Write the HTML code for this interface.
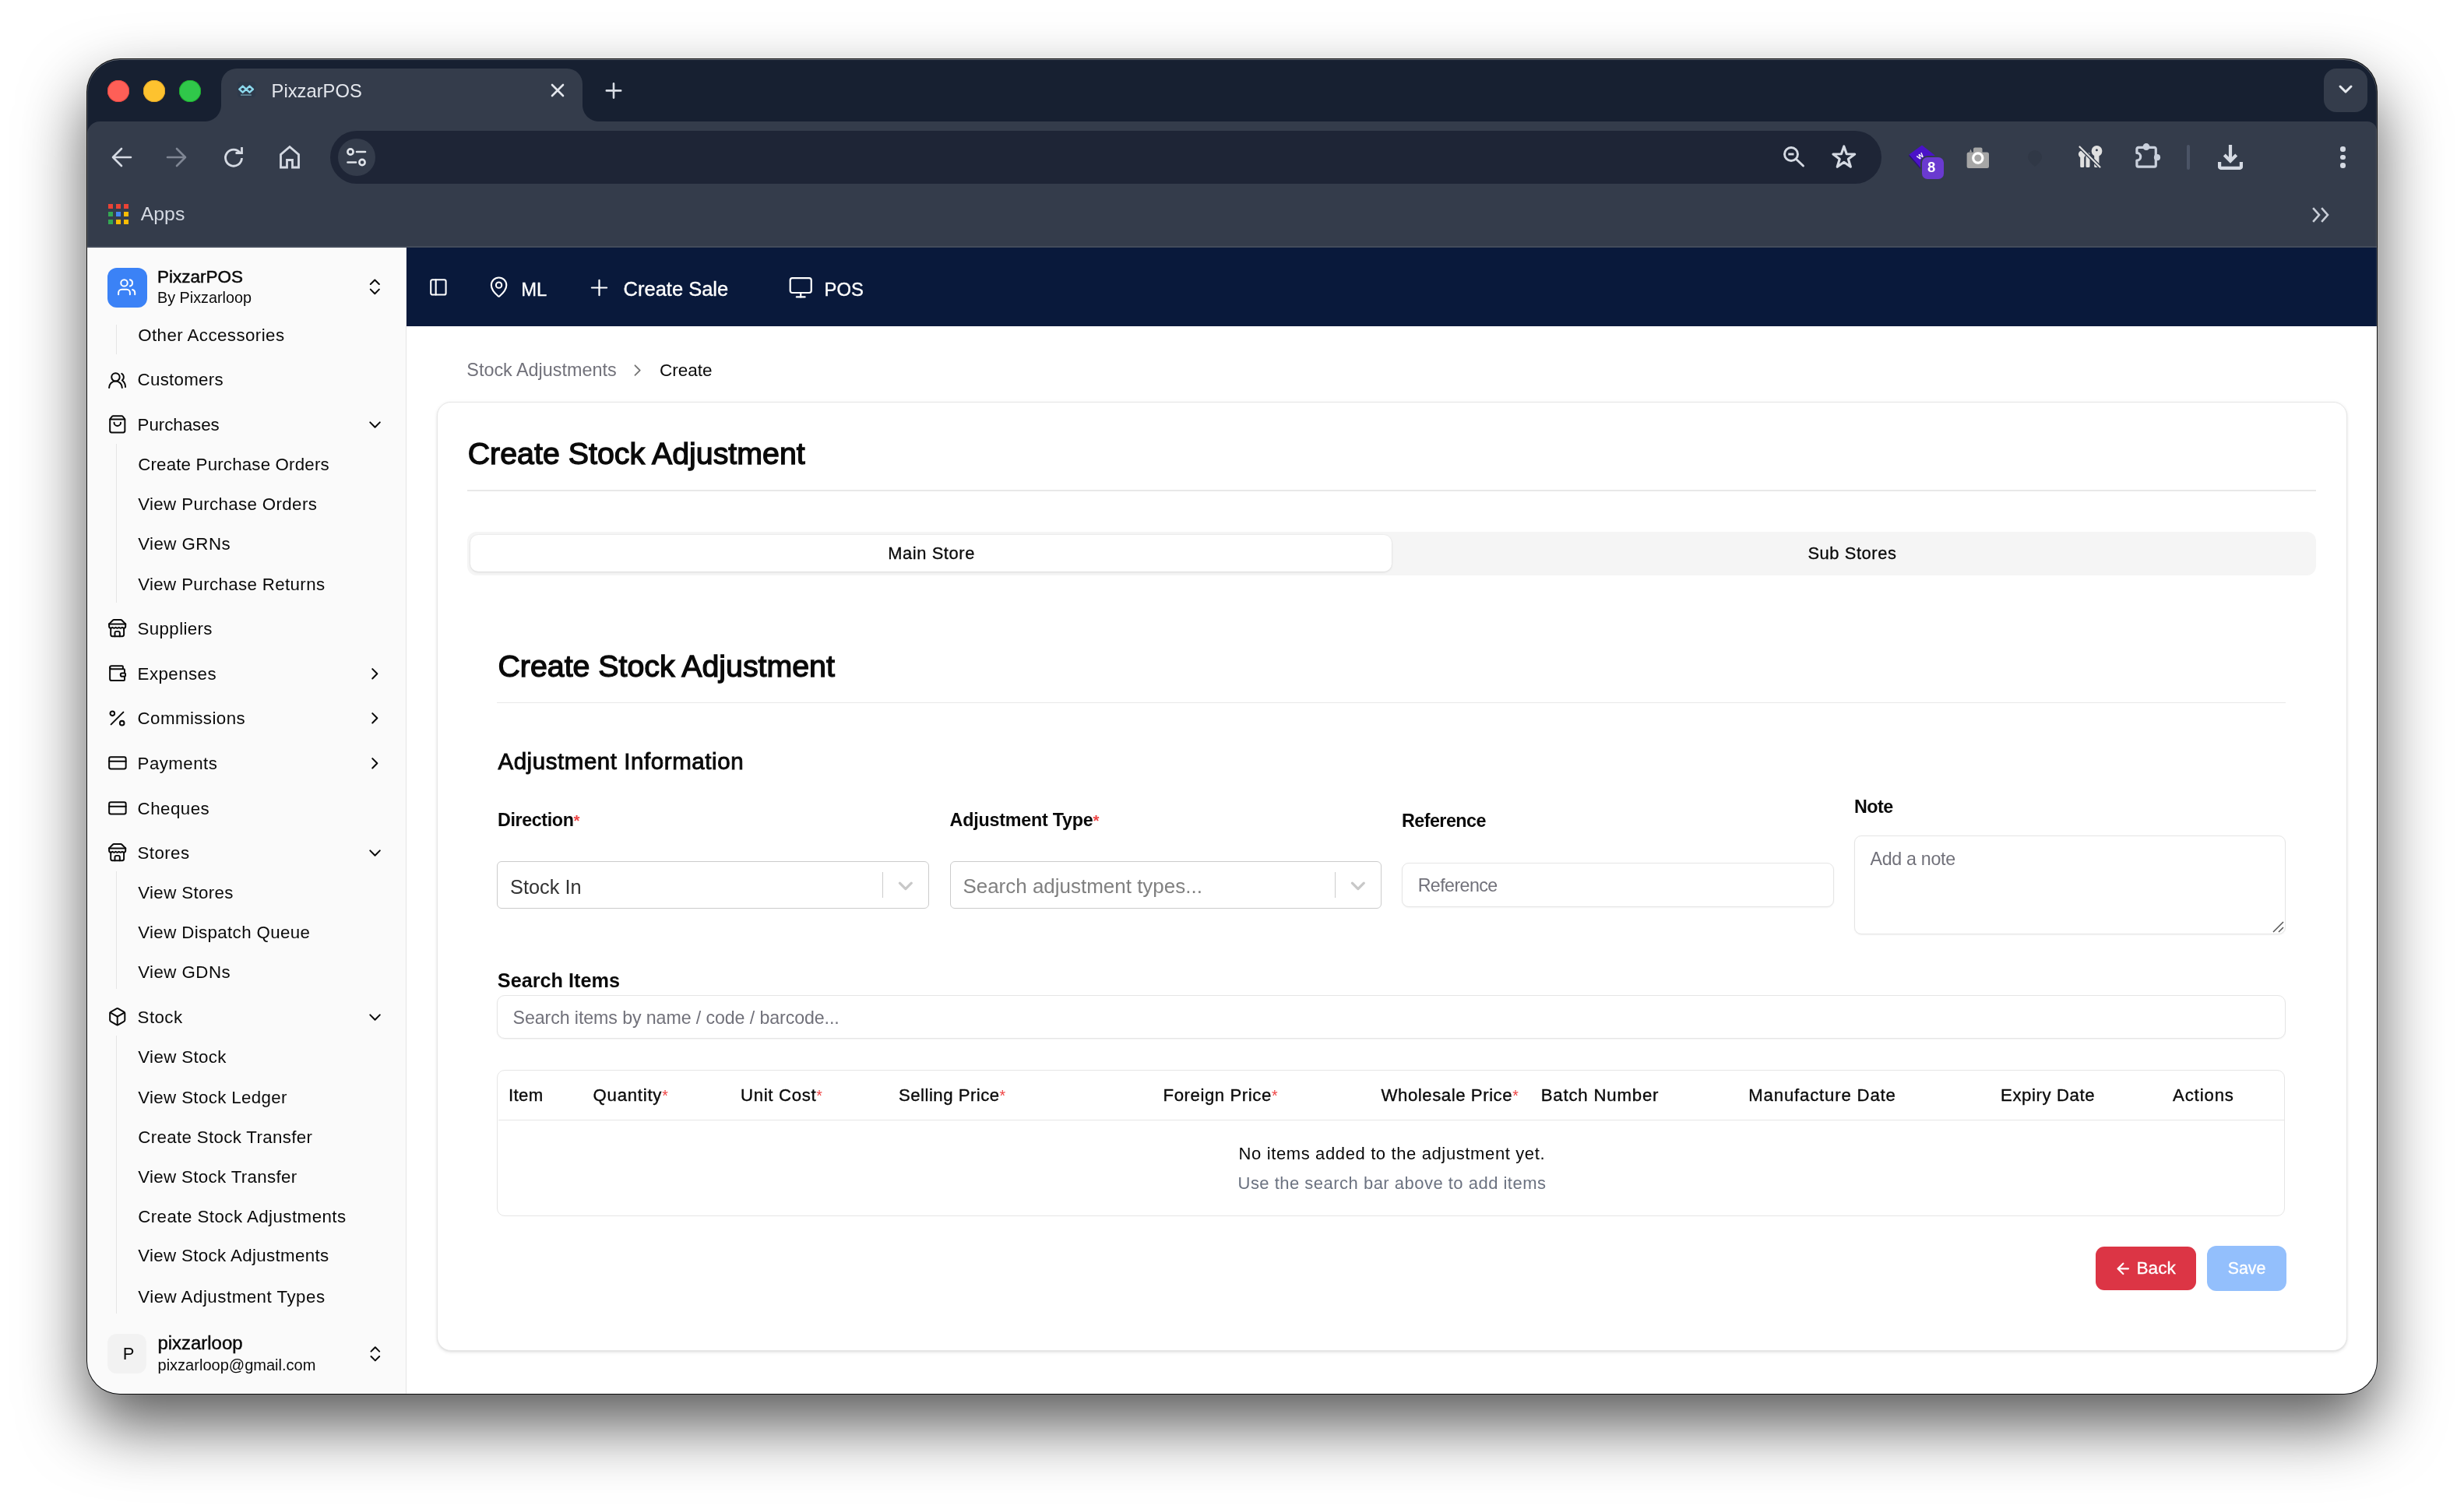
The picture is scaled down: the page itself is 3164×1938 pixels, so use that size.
<!DOCTYPE html>
<html><head><meta charset="utf-8"><style>
html,body{margin:0;padding:0;width:3164px;height:1938px;overflow:hidden;background:#ffffff;font-family:"Liberation Sans",sans-serif;}
.t{position:absolute;white-space:nowrap;line-height:1;font-family:"Liberation Sans",sans-serif;}
#win{position:absolute;left:112px;top:76px;width:2940px;height:1714px;border-radius:42px;overflow:hidden;background:#172031;box-shadow:0 0 0 1px rgba(0,0,0,.92),0 40px 84px rgba(0,0,0,.65);}
#in{position:absolute;left:-112px;top:-76px;width:3164px;height:1938px;will-change:transform;}
#hl{position:absolute;left:0;top:0;right:0;bottom:0;border-radius:42px;box-shadow:inset 0 1px 0 rgba(255,255,255,.22), inset 0 0 0 1px rgba(255,255,255,.16);pointer-events:none}
</style></head><body>
<div id="win"><div id="in">
<div style="position:absolute;left:112px;top:155.5px;width:2940px;height:162.5px;background:#343c4b;border-radius:16px 12px 0 0"></div>
<div style="position:absolute;left:284px;top:88px;width:464px;height:72px;background:#343c4b;border-radius:20px 20px 0 0"></div>
<div style="position:absolute;left:263px;top:134.5px;width:21px;height:21px;background:radial-gradient(circle at 0 0, #172031 20.5px, #343c4b 21.5px)"></div>
<div style="position:absolute;left:748px;top:134.5px;width:21px;height:21px;background:radial-gradient(circle at 100% 0, #172031 20.5px, #343c4b 21.5px)"></div>
<div style="position:absolute;left:138px;top:103px;width:28px;height:28px;border-radius:50%;background:#fe5f57;box-shadow:inset 0 0 0 0.8px #e0443e"></div>
<div style="position:absolute;left:184px;top:103px;width:28px;height:28px;border-radius:50%;background:#fdc22f;box-shadow:inset 0 0 0 0.8px #dea123"></div>
<div style="position:absolute;left:230px;top:103px;width:28px;height:28px;border-radius:50%;background:#30c84a;box-shadow:inset 0 0 0 0.8px #1aab29"></div>
<svg style="position:absolute;left:295px;top:95px;" width="50" height="40" viewBox="0 0 50 40"><rect x="10" y="10" width="23" height="20" rx="4" fill="#1a3048" opacity=".25"/><path d="M16.7 15.6L21.1 19.6L25.5 15.6L29.9 19.6L25.5 23.6L21.1 19.6L16.7 23.6L12.3 19.6Z" fill="none" stroke="#8cd8ec" stroke-width="2.5" stroke-linejoin="round"/><rect x="14" y="26.3" width="13.8" height="1.5" fill="#6a93a3"/></svg>
<div class="t" style="left:348.60px;top:105.10px;font-size:23.76px;color:#e4e7ed;">PixzarPOS</div>
<svg style="position:absolute;left:706px;top:106px;" width="20" height="20" viewBox="0 0 20 20"><path d="M3 3L17 17M17 3L3 17" stroke="#e4e7ed" stroke-width="2.6" stroke-linecap="round"/></svg>
<svg style="position:absolute;left:776px;top:104px;" width="24" height="24" viewBox="0 0 24 24"><path d="M12 3.2V21.6M2.8 12.4H21.2" stroke="#d8dce4" stroke-width="2.6" stroke-linecap="round"/></svg>
<div style="position:absolute;left:2984px;top:88px;width:56px;height:56px;background:#343c4b;border-radius:16px"></div>
<svg style="position:absolute;left:3002px;top:108px;" width="20" height="14" viewBox="0 0 20 14"><path d="M3 3L10 10L17 3" fill="none" stroke="#e6e9ee" stroke-width="3" stroke-linecap="round" stroke-linejoin="round"/></svg>
<svg style="position:absolute;left:142px;top:188px;" width="28" height="28" viewBox="0 0 28 28"><path d="M14 3L3 14L14 25M3 14H26" fill="none" stroke="#d5dae3" stroke-width="2.6" stroke-linecap="round" stroke-linejoin="round"/></svg>
<svg style="position:absolute;left:213px;top:188px;" width="28" height="28" viewBox="0 0 28 28"><path d="M14 3L25 14L14 25M2 14H25" fill="none" stroke="#7f8694" stroke-width="2.6" stroke-linecap="round" stroke-linejoin="round"/></svg>
<svg style="position:absolute;left:286px;top:187px;" width="28" height="30" viewBox="0 0 28 30"><path d="M22.5 9.5A10.5 10.5 0 1 0 24.5 16" fill="none" stroke="#d5dae3" stroke-width="2.8"/><path d="M16.5 9.5H24.5V2" fill="none" stroke="#d5dae3" stroke-width="2.8"/></svg>
<svg style="position:absolute;left:358px;top:186px;" width="28" height="32" viewBox="0 0 28 32"><path d="M2.5 29V12.5L14 2.5L25.5 12.5V29H17.5V19.5H10.5V29Z" fill="none" stroke="#d5dae3" stroke-width="2.8" stroke-linejoin="miter"/></svg>
<div style="position:absolute;left:424px;top:168px;width:1992px;height:68px;background:#1e2536;border-radius:34px"></div>
<div style="position:absolute;left:433.5px;top:178px;width:48px;height:48px;border-radius:50%;background:#343c4b"></div>
<svg style="position:absolute;left:444px;top:189px;" width="28" height="26" viewBox="0 0 28 26"><g fill="none" stroke="#e0e4ea" stroke-width="2.6" stroke-linecap="round"><circle cx="6" cy="6" r="3.6"/><path d="M14 6H25"/><circle cx="21" cy="19.5" r="3.6"/><path d="M2.5 19.5H13"/></g></svg>
<svg style="position:absolute;left:2286px;top:184px;" width="36" height="36" viewBox="0 0 36 36"><g fill="none" stroke="#d5dae3" stroke-width="2.9"><circle cx="14" cy="14" r="8.5"/><path d="M20.3 20.3L29.5 29" stroke-linecap="round"/><path d="M10.3 14H17.5"/></g></svg>
<svg style="position:absolute;left:2350px;top:184px;" width="36" height="36" viewBox="0 0 36 36"><path d="M17.80 3.90 L21.23 13.78 L31.69 13.99 L23.35 20.30 L26.38 30.31 L17.80 24.34 L9.22 30.31 L12.25 20.30 L3.91 13.99 L14.37 13.78Z" fill="none" stroke="#d5dae3" stroke-width="3.1" stroke-linejoin="round"/></svg>
<svg style="position:absolute;left:2448px;top:182px;" width="40" height="38" viewBox="0 0 40 38"><path d="M3.4 16.5L20 4.4L36.6 17.4L18 33.6Z" fill="#4a12c8"/><path d="M3.4 16.5L18 33.6L18 35L3.4 18.5Z" fill="#2a0a80"/><text x="13" y="22" font-family="Liberation Sans" font-weight="bold" font-size="11" fill="#fff" transform="rotate(-38 17 18)">w</text></svg>
<div style="position:absolute;left:2468px;top:202px;width:28px;height:28.19999999999999px;background:#6a3ad0;border-radius:7px;box-shadow:0 0 0 2px #343c4b"></div>
<div class="t" style="left:2475.00px;top:206.28px;font-size:18.50px;color:#ffffff;font-weight:bold;">8</div>
<svg style="position:absolute;left:2523px;top:186px;" width="34" height="32" viewBox="0 0 34 32"><path d="M2.6 12a2.5 2.5 0 0 1 2.5-2.5H11V5.5a2 2 0 0 1 2-2h7.5a2 2 0 0 1 2 2v4h6a2.5 2.5 0 0 1 2.5 2.5v15.5a2.5 2.5 0 0 1-2.5 2.5H5.1a2.5 2.5 0 0 1-2.5-2.5Z" fill="#a6a6a6"/><path d="M6 9.5L7.5 5.5L9 9.5Z" fill="#a6a6a6"/><circle cx="16.8" cy="17" r="6.1" fill="none" stroke="#ffffff" stroke-width="3.2"/></svg>
<svg style="position:absolute;left:2600px;top:191px;" width="26" height="24" viewBox="0 0 26 24"><path d="M13 2a9 9 0 0 1 9 9c0 5-9 12-9 12S4 16 4 11a9 9 0 0 1 9-9Z" fill="#2c3341" opacity=".45"/></svg>
<svg style="position:absolute;left:2666px;top:184px;" width="36" height="34" viewBox="0 0 36 34"><g fill="#e0e0e0"><circle cx="7.5" cy="14" r="4.6"/><rect x="5.2" y="16" width="5" height="15" rx="1.5"/><circle cx="26.5" cy="10" r="6.9"/><rect x="23.2" y="14" width="6.2" height="17" rx="1.5"/><rect x="12.5" y="12" width="5" height="19" rx="1.5"/></g><circle cx="26.4" cy="8.8" r="1.5" fill="#343c4b"/><path d="M4 4L31 31" stroke="#343c4b" stroke-width="4.6"/><path d="M4.5 4.5L30.5 30.5" stroke="#e0e0e0" stroke-width="2.2" stroke-linecap="round"/></svg>
<svg style="position:absolute;left:2740px;top:182px;" width="38" height="36" viewBox="0 0 38 36"><g fill="#c9d0dc"><circle cx="16" cy="6.6" r="4.5"/><circle cx="30" cy="20.2" r="4.1"/></g><path d="M6 7.4H26.3a2 2 0 0 1 2 2V30.2a2 2 0 0 1-2 2H5.9a2 2 0 0 1-2-2V24A4.6 4.6 0 0 0 3.9 14.4V9.4a2 2 0 0 1 2-2Z" fill="none" stroke="#c9d0dc" stroke-width="3.2" stroke-linejoin="round"/></svg>
<div style="position:absolute;left:2808px;top:186px;width:4px;height:32px;background:#4b5466;border-radius:2px"></div>
<svg style="position:absolute;left:2846px;top:184px;" width="36" height="36" viewBox="0 0 36 36"><g fill="none" stroke="#d5dae3" stroke-width="4.2"><path d="M18 2V23"/><path d="M10.3 15L18 22.8L25.7 15" stroke-linejoin="miter"/><path d="M4.1 24V30.3a1.5 1.5 0 0 0 1.5 1.5H30.4a1.5 1.5 0 0 0 1.5-1.5V24"/></g></svg>
<div style="position:absolute;left:3005px;top:188.2px;width:6.6px;height:6.6px;border-radius:50%;background:#d5dae3"></div>
<div style="position:absolute;left:3005px;top:198.7px;width:6.6px;height:6.6px;border-radius:50%;background:#d5dae3"></div>
<div style="position:absolute;left:3005px;top:209.2px;width:6.6px;height:6.6px;border-radius:50%;background:#d5dae3"></div>
<div style="position:absolute;left:138.6px;top:261.7px;width:6.599999999999994px;height:6.600000000000023px;background:#ea4335"></div>
<div style="position:absolute;left:148.7px;top:261.7px;width:6.599999999999994px;height:6.600000000000023px;background:#ea4335"></div>
<div style="position:absolute;left:158.79999999999998px;top:261.7px;width:6.599999999999994px;height:6.600000000000023px;background:#ea4335"></div>
<div style="position:absolute;left:138.6px;top:271.8px;width:6.599999999999994px;height:6.600000000000023px;background:#34a853"></div>
<div style="position:absolute;left:148.7px;top:271.8px;width:6.599999999999994px;height:6.600000000000023px;background:#4285f4"></div>
<div style="position:absolute;left:158.79999999999998px;top:271.8px;width:6.599999999999994px;height:6.600000000000023px;background:#fbbc05"></div>
<div style="position:absolute;left:138.6px;top:281.9px;width:6.599999999999994px;height:6.600000000000023px;background:#34a853"></div>
<div style="position:absolute;left:148.7px;top:281.9px;width:6.599999999999994px;height:6.600000000000023px;background:#fbbc05"></div>
<div style="position:absolute;left:158.79999999999998px;top:281.9px;width:6.599999999999994px;height:6.600000000000023px;background:#fbbc05"></div>
<div class="t" style="left:180.80px;top:262.93px;font-size:24.79px;color:#d5dae3;">Apps</div>
<svg style="position:absolute;left:2968px;top:266px;" width="26" height="20" viewBox="0 0 26 20"><g fill="none" stroke="#c9ced8" stroke-width="2.6" stroke-linecap="square"><path d="M3 2L10 10L3 18"/><path d="M14 2L21 10L14 18"/></g></svg>
<div style="position:absolute;left:112px;top:315.5px;width:2940px;height:2.3000000000000114px;background:#434b5a"></div>
<div style="position:absolute;left:112px;top:318px;width:409px;height:1474px;background:#fafafa"></div>
<div style="position:absolute;left:521px;top:318px;width:1px;height:1474px;background:#e5e5e5"></div>
<div style="position:absolute;left:522px;top:318px;width:2530px;height:100.69999999999999px;background:#09193b"></div>
<div style="position:absolute;left:522px;top:418.7px;width:2530px;height:1373.3px;background:#ffffff"></div>
<div style="position:absolute;left:138px;top:344px;width:50.69999999999999px;height:50.69999999999999px;background:#3b82f6;border-radius:12px"></div>
<svg style="position:absolute;left:150.23px;top:356.13px" width="25.35" height="25.35" viewBox="0 0 24 24" fill="none" stroke="#ffffff" stroke-width="1.894" stroke-linecap="round" stroke-linejoin="round"><path d="M16 21v-2a4 4 0 0 0-4-4H6a4 4 0 0 0-4 4v2"/><circle cx="9" cy="7" r="4"/><path d="M22 21v-2a4 4 0 0 0-3-3.87"/><path d="M16 3.13a4 4 0 0 1 0 7.75"/></svg>
<div class="t" style="left:202.00px;top:345.08px;font-size:22.49px;color:#0a0a0a;-webkit-text-stroke:0.5px #0a0a0a;">PixzarPOS</div>
<div class="t" style="left:202.00px;top:372.98px;font-size:19.79px;color:#0a0a0a;">By Pixzarloop</div>
<svg style="position:absolute;left:468.23px;top:355.48px" width="26.64" height="26.64" viewBox="0 0 24 24" fill="none" stroke="#0a0a0a" stroke-width="1.802" stroke-linecap="round" stroke-linejoin="round"><path d="m7 15 5 5 5-5"/><path d="m7 9 5-5 5 5"/></svg>
<div style="position:absolute;left:149px;top:416.5px;width:1.1999999999999886px;height:38.5px;background:#e5e5e5"></div>
<div class="t" style="left:177.20px;top:419.75px;font-size:22.30px;color:#0a0a0a;letter-spacing:0.434px;">Other Accessories</div>
<svg style="position:absolute;left:138.20px;top:475.60px" width="25.10" height="25.10" viewBox="0 0 24 24" fill="none" stroke="#0a0a0a" stroke-width="1.912" stroke-linecap="round" stroke-linejoin="round"><path d="M18 21a8 8 0 0 0-16 0"/><circle cx="10" cy="8" r="5"/><path d="M22 20c0-3.37-2-6.5-4-8a5 5 0 0 0-.45-8.3"/></svg>
<div class="t" style="left:176.60px;top:476.84px;font-size:22.30px;color:#0a0a0a;letter-spacing:0.274px;">Customers</div>
<svg style="position:absolute;left:138.03px;top:531.63px" width="25.55" height="25.55" viewBox="0 0 24 24" fill="none" stroke="#0a0a0a" stroke-width="1.879" stroke-linecap="round" stroke-linejoin="round"><path d="M16 10a4 4 0 0 1-8 0"/><path d="M3.103 6.034h17.794"/><path d="M3.4 5.467a2 2 0 0 0-.4 1.2V20a2 2 0 0 0 2 2h14a2 2 0 0 0 2-2V6.667a2 2 0 0 0-.4-1.2l-2-2.667A2 2 0 0 0 17 2H7a2 2 0 0 0-1.6.8z"/></svg>
<div class="t" style="left:176.60px;top:535.14px;font-size:22.30px;color:#0a0a0a;letter-spacing:-0.033px;">Purchases</div>
<svg style="position:absolute;left:469.30px;top:532.85px" width="25.10" height="25.10" viewBox="0 0 24 24" fill="none" stroke="#0a0a0a" stroke-width="1.912" stroke-linecap="round" stroke-linejoin="round"><path d="m6 9 6 6 6-6"/></svg>
<div style="position:absolute;left:149px;top:570.4px;width:1.1999999999999886px;height:204.0px;background:#e5e5e5"></div>
<div class="t" style="left:177.20px;top:585.54px;font-size:22.30px;color:#0a0a0a;letter-spacing:0.181px;">Create Purchase Orders</div>
<div class="t" style="left:177.20px;top:636.74px;font-size:22.30px;color:#0a0a0a;letter-spacing:0.368px;">View Purchase Orders</div>
<div class="t" style="left:177.20px;top:687.84px;font-size:22.30px;color:#0a0a0a;letter-spacing:0.451px;">View GRNs</div>
<div class="t" style="left:177.20px;top:739.94px;font-size:22.30px;color:#0a0a0a;letter-spacing:0.365px;">View Purchase Returns</div>
<svg style="position:absolute;left:138.29px;top:794.09px" width="25.32" height="25.32" viewBox="0 0 24 24" fill="none" stroke="#0a0a0a" stroke-width="1.896" stroke-linecap="round" stroke-linejoin="round"><path d="m2 7 4.41-4.41A2 2 0 0 1 7.83 2h8.34a2 2 0 0 1 1.42.59L22 7"/><path d="M4 12v8a2 2 0 0 0 2 2h12a2 2 0 0 0 2-2v-8"/><path d="M15 22v-4a2 2 0 0 0-2-2h-2a2 2 0 0 0-2 2v4"/><path d="M2 7h20"/><path d="M22 7v3a2 2 0 0 1-2 2a2.7 2.7 0 0 1-1.59-.63.7.7 0 0 0-.82 0A2.7 2.7 0 0 1 16 12a2.7 2.7 0 0 1-1.59-.63.7.7 0 0 0-.82 0A2.7 2.7 0 0 1 12 12a2.7 2.7 0 0 1-1.59-.63.7.7 0 0 0-.82 0A2.7 2.7 0 0 1 8 12a2.7 2.7 0 0 1-1.59-.63.7.7 0 0 0-.82 0A2.7 2.7 0 0 1 4 12a2 2 0 0 1-2-2V7"/></svg>
<div class="t" style="left:176.60px;top:797.14px;font-size:22.30px;color:#0a0a0a;letter-spacing:0.365px;">Suppliers</div>
<svg style="position:absolute;left:138.43px;top:852.28px" width="25.13" height="25.13" viewBox="0 0 24 24" fill="none" stroke="#0a0a0a" stroke-width="1.910" stroke-linecap="round" stroke-linejoin="round"><path d="M19 7V4a1 1 0 0 0-1-1H5a2 2 0 0 0 0 4h15a1 1 0 0 1 1 1v4h-3a2 2 0 0 0 0 4h3a1 1 0 0 0 1-1v-2a1 1 0 0 0-1-1"/><path d="M3 5v14a2 2 0 0 0 2 2h15a1 1 0 0 0 1-1v-4"/></svg>
<div class="t" style="left:176.60px;top:854.54px;font-size:22.30px;color:#0a0a0a;letter-spacing:0.439px;">Expenses</div>
<svg style="position:absolute;left:469.05px;top:852.50px" width="24.60" height="24.60" viewBox="0 0 24 24" fill="none" stroke="#0a0a0a" stroke-width="1.951" stroke-linecap="round" stroke-linejoin="round"><path d="m9 18 6-6-6-6"/></svg>
<svg style="position:absolute;left:137.00px;top:909.00px" width="27.00" height="27.00" viewBox="0 0 24 24" fill="none" stroke="#0a0a0a" stroke-width="1.778" stroke-linecap="round" stroke-linejoin="round"><line x1="19" x2="5" y1="5" y2="19"/><circle cx="6.5" cy="6.5" r="2.5"/><circle cx="17.5" cy="17.5" r="2.5"/></svg>
<div class="t" style="left:176.60px;top:912.24px;font-size:22.30px;color:#0a0a0a;letter-spacing:0.42px;">Commissions</div>
<svg style="position:absolute;left:469.05px;top:910.20px" width="24.60" height="24.60" viewBox="0 0 24 24" fill="none" stroke="#0a0a0a" stroke-width="1.951" stroke-linecap="round" stroke-linejoin="round"><path d="m9 18 6-6-6-6"/></svg>
<svg style="position:absolute;left:137.75px;top:966.70px" width="25.81" height="25.81" viewBox="0 0 24 24" fill="none" stroke="#0a0a0a" stroke-width="1.860" stroke-linecap="round" stroke-linejoin="round"><rect width="20" height="14" x="2" y="5" rx="2"/><line x1="2" x2="22" y1="10" y2="10"/></svg>
<div class="t" style="left:176.60px;top:969.64px;font-size:22.30px;color:#0a0a0a;letter-spacing:0.445px;">Payments</div>
<svg style="position:absolute;left:469.05px;top:967.60px" width="24.60" height="24.60" viewBox="0 0 24 24" fill="none" stroke="#0a0a0a" stroke-width="1.951" stroke-linecap="round" stroke-linejoin="round"><path d="m9 18 6-6-6-6"/></svg>
<svg style="position:absolute;left:137.75px;top:1024.70px" width="25.81" height="25.81" viewBox="0 0 24 24" fill="none" stroke="#0a0a0a" stroke-width="1.860" stroke-linecap="round" stroke-linejoin="round"><rect width="20" height="14" x="2" y="5" rx="2"/><line x1="2" x2="22" y1="10" y2="10"/></svg>
<div class="t" style="left:176.60px;top:1027.65px;font-size:22.30px;color:#0a0a0a;letter-spacing:0.467px;">Cheques</div>
<svg style="position:absolute;left:138.29px;top:1082.09px" width="25.32" height="25.32" viewBox="0 0 24 24" fill="none" stroke="#0a0a0a" stroke-width="1.896" stroke-linecap="round" stroke-linejoin="round"><path d="m2 7 4.41-4.41A2 2 0 0 1 7.83 2h8.34a2 2 0 0 1 1.42.59L22 7"/><path d="M4 12v8a2 2 0 0 0 2 2h12a2 2 0 0 0 2-2v-8"/><path d="M15 22v-4a2 2 0 0 0-2-2h-2a2 2 0 0 0-2 2v4"/><path d="M2 7h20"/><path d="M22 7v3a2 2 0 0 1-2 2a2.7 2.7 0 0 1-1.59-.63.7.7 0 0 0-.82 0A2.7 2.7 0 0 1 16 12a2.7 2.7 0 0 1-1.59-.63.7.7 0 0 0-.82 0A2.7 2.7 0 0 1 12 12a2.7 2.7 0 0 1-1.59-.63.7.7 0 0 0-.82 0A2.7 2.7 0 0 1 8 12a2.7 2.7 0 0 1-1.59-.63.7.7 0 0 0-.82 0A2.7 2.7 0 0 1 4 12a2 2 0 0 1-2-2V7"/></svg>
<div class="t" style="left:176.60px;top:1085.35px;font-size:22.30px;color:#0a0a0a;letter-spacing:0.405px;">Stores</div>
<svg style="position:absolute;left:469.30px;top:1083.05px" width="25.10" height="25.10" viewBox="0 0 24 24" fill="none" stroke="#0a0a0a" stroke-width="1.912" stroke-linecap="round" stroke-linejoin="round"><path d="m6 9 6 6 6-6"/></svg>
<div style="position:absolute;left:149px;top:1119px;width:1.1999999999999886px;height:151px;background:#e5e5e5"></div>
<div class="t" style="left:177.20px;top:1135.95px;font-size:22.30px;color:#0a0a0a;letter-spacing:0.372px;">View Stores</div>
<div class="t" style="left:177.20px;top:1186.85px;font-size:22.30px;color:#0a0a0a;letter-spacing:0.373px;">View Dispatch Queue</div>
<div class="t" style="left:177.20px;top:1238.45px;font-size:22.30px;color:#0a0a0a;letter-spacing:0.451px;">View GDNs</div>
<svg style="position:absolute;left:137.92px;top:1292.77px" width="25.47" height="25.47" viewBox="0 0 24 24" fill="none" stroke="#0a0a0a" stroke-width="1.885" stroke-linecap="round" stroke-linejoin="round"><path d="M21 8a2 2 0 0 0-1-1.73l-7-4a2 2 0 0 0-2 0l-7 4A2 2 0 0 0 3 8v8a2 2 0 0 0 1 1.73l7 4a2 2 0 0 0 2 0l7-4A2 2 0 0 0 21 16Z"/><path d="m3.3 7 8.7 5 8.7-5"/><path d="M12 22V12"/></svg>
<div class="t" style="left:176.60px;top:1296.15px;font-size:22.30px;color:#0a0a0a;letter-spacing:0.438px;">Stock</div>
<svg style="position:absolute;left:469.30px;top:1293.85px" width="25.10" height="25.10" viewBox="0 0 24 24" fill="none" stroke="#0a0a0a" stroke-width="1.912" stroke-linecap="round" stroke-linejoin="round"><path d="m6 9 6 6 6-6"/></svg>
<div style="position:absolute;left:149px;top:1329.8px;width:1.1999999999999886px;height:357.70000000000005px;background:#e5e5e5"></div>
<div class="t" style="left:177.20px;top:1346.85px;font-size:22.30px;color:#0a0a0a;letter-spacing:0.383px;">View Stock</div>
<div class="t" style="left:177.20px;top:1399.25px;font-size:22.30px;color:#0a0a0a;letter-spacing:0.364px;">View Stock Ledger</div>
<div class="t" style="left:177.20px;top:1449.95px;font-size:22.30px;color:#0a0a0a;letter-spacing:0.34px;">Create Stock Transfer</div>
<div class="t" style="left:177.20px;top:1500.75px;font-size:22.30px;color:#0a0a0a;letter-spacing:0.345px;">View Stock Transfer</div>
<div class="t" style="left:177.20px;top:1551.95px;font-size:22.30px;color:#0a0a0a;letter-spacing:0.453px;">Create Stock Adjustments</div>
<div class="t" style="left:177.20px;top:1602.45px;font-size:22.30px;color:#0a0a0a;letter-spacing:0.355px;">View Stock Adjustments</div>
<div class="t" style="left:177.20px;top:1654.65px;font-size:22.30px;color:#0a0a0a;letter-spacing:0.508px;">View Adjustment Types</div>
<div style="position:absolute;left:137.9px;top:1712.7px;width:50.29999999999998px;height:51.200000000000045px;background:#f2f2f2;border-radius:12px"></div>
<div class="t" style="left:157.70px;top:1728.10px;font-size:22.00px;color:#0a0a0a;">P</div>
<div class="t" style="left:202.50px;top:1713.47px;font-size:23.91px;color:#0a0a0a;-webkit-text-stroke:0.45px #0a0a0a;">pixzarloop</div>
<div class="t" style="left:202.50px;top:1742.77px;font-size:20.04px;color:#0a0a0a;">pixzarloop@gmail.com</div>
<svg style="position:absolute;left:469.02px;top:1725.72px" width="25.66" height="25.66" viewBox="0 0 24 24" fill="none" stroke="#0a0a0a" stroke-width="1.870" stroke-linecap="round" stroke-linejoin="round"><path d="m7 15 5 5 5-5"/><path d="m7 9 5-5 5 5"/></svg>
<svg style="position:absolute;left:549.95px;top:356.00px" width="25.80" height="25.80" viewBox="0 0 24 24" fill="none" stroke="#ffffff" stroke-width="1.953" stroke-linecap="round" stroke-linejoin="round"><rect width="18" height="18" x="3" y="3" rx="2"/><path d="M9 3v18"/></svg>
<svg style="position:absolute;left:625.77px;top:354.07px" width="29.16" height="29.16" viewBox="0 0 24 24" fill="none" stroke="#ffffff" stroke-width="1.728" stroke-linecap="round" stroke-linejoin="round"><path d="M20 10c0 4.993-5.539 10.193-7.399 11.799a1 1 0 0 1-1.202 0C9.539 20.193 4 14.993 4 10a8 8 0 0 1 16 0"/><circle cx="12" cy="10" r="3"/></svg>
<div class="t" style="left:669.30px;top:360.01px;font-size:23.76px;color:#ffffff;-webkit-text-stroke:0.35px #ffffff;">ML</div>
<svg style="position:absolute;left:753.40px;top:352.55px" width="33.00" height="33.00" viewBox="0 0 24 24" fill="none" stroke="#ffffff" stroke-width="1.600" stroke-linecap="round" stroke-linejoin="round"><path d="M5 12h14"/><path d="M12 5v14"/></svg>
<div class="t" style="left:800.60px;top:358.54px;font-size:25.49px;color:#ffffff;-webkit-text-stroke:0.35px #ffffff;">Create Sale</div>
<svg style="position:absolute;left:1011.76px;top:353.21px" width="32.48" height="32.48" viewBox="0 0 24 24" fill="none" stroke="#ffffff" stroke-width="1.626" stroke-linecap="round" stroke-linejoin="round"><rect width="20" height="14" x="2" y="3" rx="2"/><line x1="8" x2="16" y1="21" y2="21"/><line x1="12" x2="12" y1="17" y2="21"/></svg>
<div class="t" style="left:1058.50px;top:359.95px;font-size:23.82px;color:#ffffff;-webkit-text-stroke:0.35px #ffffff;">POS</div>
<div class="t" style="left:599.30px;top:463.91px;font-size:23.40px;color:#71717a;">Stock Adjustments</div>
<svg style="position:absolute;left:806.20px;top:462.90px" width="25.20" height="25.20" viewBox="0 0 24 24" fill="none" stroke="#737373" stroke-width="1.714" stroke-linecap="round" stroke-linejoin="round"><path d="m9 18 6-6-6-6"/></svg>
<div class="t" style="left:847.00px;top:464.66px;font-size:22.52px;color:#0a0a0a;">Create</div>
<div style="position:absolute;left:560.5px;top:516px;width:2453.0px;height:1218.5px;box-sizing:border-box;border:1.5px solid #e6e6e6;border-radius:18px;background:#fff;box-shadow:0 1.5px 4.5px rgba(0,0,0,.09), 0 1.5px 3px -1.5px rgba(0,0,0,.1)"></div>
<div class="t" style="left:600.70px;top:563.20px;font-size:39.30px;color:#0a0a0a;letter-spacing:0.026px;-webkit-text-stroke:1.35px #0a0a0a;">Create Stock Adjustment</div>
<div style="position:absolute;left:599.5px;top:629px;width:2374.5px;height:1.5px;background:#e8e8e8"></div>
<div style="position:absolute;left:599.5px;top:682.5px;width:2374.5px;height:56.0px;background:#f5f5f5;border-radius:12px"></div>
<div style="position:absolute;left:603.6px;top:686.8px;width:1183.4px;height:47.200000000000045px;background:#ffffff;border-radius:10px;box-shadow:0 1px 3px rgba(0,0,0,.10), 0 0 0 1px rgba(0,0,0,.02)"></div>
<div class="t" style="left:1140.20px;top:699.78px;font-size:21.90px;color:#0a0a0a;letter-spacing:0.589px;-webkit-text-stroke:0.3px #0a0a0a;">Main Store</div>
<div class="t" style="left:2321.40px;top:699.78px;font-size:21.90px;color:#0a0a0a;letter-spacing:0.584px;-webkit-text-stroke:0.3px #0a0a0a;">Sub Stores</div>
<div class="t" style="left:639.50px;top:836.00px;font-size:39.30px;color:#0a0a0a;letter-spacing:-0.006px;-webkit-text-stroke:1.35px #0a0a0a;">Create Stock Adjustment</div>
<div style="position:absolute;left:637.7px;top:901.5px;width:2297.3px;height:1.5px;background:#e8e8e8"></div>
<div class="t" style="left:639.40px;top:963.32px;font-size:29.50px;color:#0a0a0a;letter-spacing:0.564px;-webkit-text-stroke:0.9px #0a0a0a;">Adjustment Information</div>
<div class="t" style="left:639.00px;top:1042.39px;font-size:23.30px;color:#0a0a0a;font-weight:bold;letter-spacing:-0.384px;">Direction<span style="color:#ef4444;-webkit-text-stroke:0;font-size:88%">*</span></div>
<div class="t" style="left:1219.60px;top:1042.39px;font-size:23.30px;color:#0a0a0a;font-weight:bold;letter-spacing:-0.223px;">Adjustment Type<span style="color:#ef4444;-webkit-text-stroke:0;font-size:88%">*</span></div>
<div class="t" style="left:1800.00px;top:1042.79px;font-size:23.30px;color:#0a0a0a;font-weight:bold;letter-spacing:-0.535px;">Reference</div>
<div class="t" style="left:2381.00px;top:1024.69px;font-size:23.30px;color:#0a0a0a;font-weight:bold;letter-spacing:-0.493px;">Note</div>
<div style="position:absolute;left:638.2px;top:1106.2px;width:555.0999999999999px;height:60.399999999999864px;box-sizing:border-box;border:1.5px solid #cccccc;border-radius:6px;background:#fff"></div>
<div style="position:absolute;left:1133.2px;top:1120px;width:1.2000000000000455px;height:33.200000000000045px;background:#cccccc"></div>
<svg style="position:absolute;left:1148.25px;top:1123.25px" width="29.70" height="29.70" viewBox="0 0 24 24" fill="none" stroke="#c8c8c8" stroke-width="2.667" stroke-linecap="round" stroke-linejoin="round"><path d="m6 9 6 6 6-6"/></svg>
<div class="t" style="left:655.00px;top:1126.57px;font-size:25.33px;color:#333333;">Stock In</div>
<div style="position:absolute;left:1219.6px;top:1106.2px;width:554.7px;height:60.399999999999864px;box-sizing:border-box;border:1.5px solid #cccccc;border-radius:6px;background:#fff"></div>
<div style="position:absolute;left:1714.2px;top:1120px;width:1.2000000000000455px;height:33.200000000000045px;background:#cccccc"></div>
<svg style="position:absolute;left:1729.25px;top:1123.25px" width="29.70" height="29.70" viewBox="0 0 24 24" fill="none" stroke="#c8c8c8" stroke-width="2.667" stroke-linecap="round" stroke-linejoin="round"><path d="m6 9 6 6 6-6"/></svg>
<div class="t" style="left:1236.40px;top:1126.02px;font-size:25.97px;color:#808080;">Search adjustment types...</div>
<div style="position:absolute;left:1800px;top:1108px;width:554.6999999999998px;height:57.200000000000045px;box-sizing:border-box;border:1.5px solid #e5e5e5;border-radius:9px;background:#fff;box-shadow:0 1px 2px rgba(0,0,0,.05)"></div>
<div class="t" style="left:1820.70px;top:1125.88px;font-size:23.20px;color:#71717a;letter-spacing:-0.568px;">Reference</div>
<div style="position:absolute;left:2381px;top:1073.3px;width:554px;height:126.90000000000009px;box-sizing:border-box;border:1.5px solid #e5e5e5;border-radius:9px;background:#fff;box-shadow:0 1px 2px rgba(0,0,0,.05)"></div>
<div class="t" style="left:2401.60px;top:1091.88px;font-size:23.20px;color:#71717a;letter-spacing:-0.304px;">Add a note</div>
<svg style="position:absolute;left:2917px;top:1182px;" width="18" height="17" viewBox="0 0 18 17"><path d="M2 15L15 2M9 15L15 9" stroke="#555" stroke-width="1.5"/></svg>
<div class="t" style="left:638.80px;top:1246.54px;font-size:25.25px;color:#0a0a0a;font-weight:bold;">Search Items</div>
<div style="position:absolute;left:638.2px;top:1278.3px;width:2296.8px;height:56.0px;box-sizing:border-box;border:1.5px solid #e5e5e5;border-radius:10px;background:#fff;box-shadow:0 1px 2px rgba(0,0,0,.05)"></div>
<div class="t" style="left:658.60px;top:1295.78px;font-size:23.20px;color:#71717a;letter-spacing:-0.092px;">Search items by name / code / barcode...</div>
<div style="position:absolute;left:638.2px;top:1374px;width:2296.2px;height:187.5px;box-sizing:border-box;border:1.5px solid #e5e5e5;border-radius:10px;background:#fff"></div>
<div style="position:absolute;left:639.5px;top:1437.6px;width:2293.5px;height:1.400000000000091px;background:#e5e5e5"></div>
<div class="t" style="left:652.90px;top:1395.73px;font-size:22.20px;color:#0a0a0a;letter-spacing:0.408px;-webkit-text-stroke:0.35px #0a0a0a;">Item</div>
<div class="t" style="left:761.60px;top:1395.73px;font-size:22.20px;color:#0a0a0a;letter-spacing:0.748px;-webkit-text-stroke:0.35px #0a0a0a;">Quantity<span style="color:#ef4444;-webkit-text-stroke:0;font-size:88%">*</span></div>
<div class="t" style="left:951.00px;top:1395.73px;font-size:22.20px;color:#0a0a0a;letter-spacing:0.674px;-webkit-text-stroke:0.35px #0a0a0a;">Unit Cost<span style="color:#ef4444;-webkit-text-stroke:0;font-size:88%">*</span></div>
<div class="t" style="left:1154.00px;top:1395.73px;font-size:22.20px;color:#0a0a0a;letter-spacing:0.482px;-webkit-text-stroke:0.35px #0a0a0a;">Selling Price<span style="color:#ef4444;-webkit-text-stroke:0;font-size:88%">*</span></div>
<div class="t" style="left:1493.50px;top:1395.73px;font-size:22.20px;color:#0a0a0a;letter-spacing:0.572px;-webkit-text-stroke:0.35px #0a0a0a;">Foreign Price<span style="color:#ef4444;-webkit-text-stroke:0;font-size:88%">*</span></div>
<div class="t" style="left:1773.50px;top:1395.73px;font-size:22.20px;color:#0a0a0a;letter-spacing:0.557px;-webkit-text-stroke:0.35px #0a0a0a;">Wholesale Price<span style="color:#ef4444;-webkit-text-stroke:0;font-size:88%">*</span></div>
<div class="t" style="left:1978.70px;top:1395.73px;font-size:22.20px;color:#0a0a0a;letter-spacing:0.818px;-webkit-text-stroke:0.35px #0a0a0a;">Batch Number</div>
<div class="t" style="left:2245.30px;top:1395.73px;font-size:22.20px;color:#0a0a0a;letter-spacing:0.816px;-webkit-text-stroke:0.35px #0a0a0a;">Manufacture Date</div>
<div class="t" style="left:2569.00px;top:1395.73px;font-size:22.20px;color:#0a0a0a;letter-spacing:0.596px;-webkit-text-stroke:0.35px #0a0a0a;">Expiry Date</div>
<div class="t" style="left:2790.00px;top:1395.73px;font-size:22.20px;color:#0a0a0a;letter-spacing:0.866px;-webkit-text-stroke:0.35px #0a0a0a;">Actions</div>
<div class="t" style="left:1590.60px;top:1470.70px;font-size:22.00px;color:#0a0a0a;letter-spacing:0.623px;">No items added to the adjustment yet.</div>
<div class="t" style="left:1589.50px;top:1508.70px;font-size:22.00px;color:#6b7280;letter-spacing:0.489px;">Use the search bar above to add items</div>
<div style="position:absolute;left:2691px;top:1601px;width:128.69999999999982px;height:55.700000000000045px;background:#dc3545;border-radius:11px"></div>
<svg style="position:absolute;left:2714.89px;top:1618.14px" width="22.71" height="22.71" viewBox="0 0 24 24" fill="none" stroke="#ffffff" stroke-width="2.325" stroke-linecap="round" stroke-linejoin="round"><path d="m12 19-7-7 7-7"/><path d="M19 12H5"/></svg>
<div class="t" style="left:2743.50px;top:1617.67px;font-size:22.63px;color:#ffffff;-webkit-text-stroke:0.3px #ffffff;">Back</div>
<div style="position:absolute;left:2834.2px;top:1600px;width:101.70000000000027px;height:57.799999999999955px;background:#93bffc;border-radius:12px"></div>
<div class="t" style="left:2860.70px;top:1618.74px;font-size:21.37px;color:#ffffff;-webkit-text-stroke:0.3px #ffffff;">Save</div>
</div><div id="hl"></div></div>
</body></html>
